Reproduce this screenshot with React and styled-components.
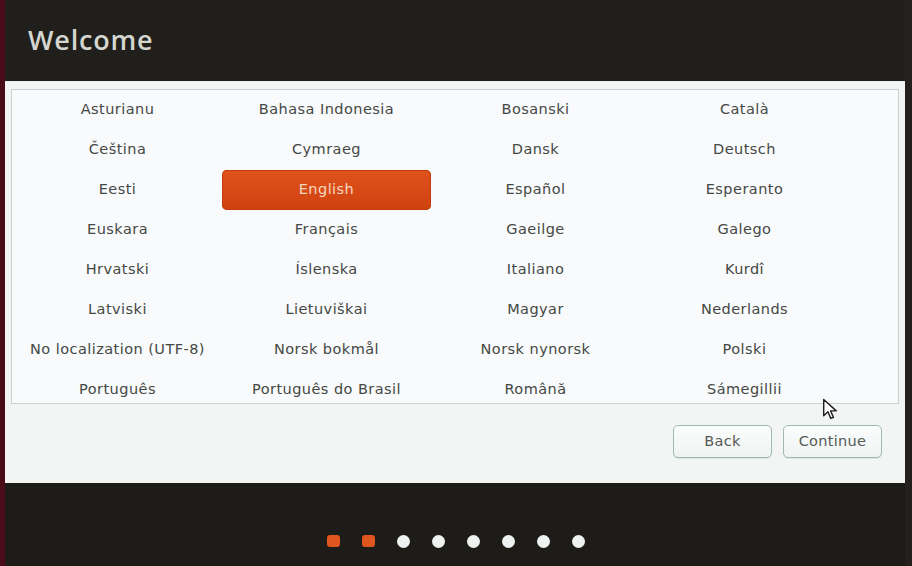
import React from 'react'
import styled, { createGlobalStyle } from 'styled-components'

const GlobalStyle = createGlobalStyle`
  html, body {
    margin: 0;
    padding: 0;
    background: #1e1c19;
  }
  body {
    font-family: "DejaVu Sans", "Open Sans", sans-serif;
  }
`

const languages = [
  'Asturianu', 'Bahasa Indonesia', 'Bosanski', 'Català',
  'Čeština', 'Cymraeg', 'Dansk', 'Deutsch',
  'Eesti', 'English', 'Español', 'Esperanto',
  'Euskara', 'Français', 'Gaeilge', 'Galego',
  'Hrvatski', 'Íslenska', 'Italiano', 'Kurdî',
  'Latviski', 'Lietuviškai', 'Magyar', 'Nederlands',
  'No localization (UTF-8)', 'Norsk bokmål', 'Norsk nynorsk', 'Polski',
  'Português', 'Português do Brasil', 'Română', 'Sámegillii',
]

const Screen = styled.div`
  width: 912px;
  height: 566px;
  display: flex;
  overflow: hidden;
  background: #1e1c19;
`

const Edge = styled.div`
  width: ${p => p.$w}px;
  flex-shrink: 0;
  background: ${p => p.$color};
`

const Main = styled.div`
  flex: 1;
  display: flex;
  flex-direction: column;
`

const Header = styled.div`
  height: 81px;
  display: flex;
  align-items: center;
  padding-left: 23px;
  padding-bottom: 2px;
  box-sizing: border-box;
  background: #211f1b;
`

const Title = styled.h1`
  margin: 0;
  font-family: "Open Sans", sans-serif;
  font-size: 27px;
  font-weight: 600;
  color: #d4d6cf;
  letter-spacing: 0.8px;
`

const Panel = styled.div`
  height: 402px;
  background: #f2f5f4;
  border-top: 1px solid #e6ecea;
  box-sizing: border-box;
  display: flex;
  flex-direction: column;
  padding: 7px 6px 0 6px;
  position: relative;
`

const ListBox = styled.div`
  height: 315px;
  background: #f8fafb;
  border: 1px solid #c9d1d1;
  box-sizing: border-box;
  overflow: hidden;
  display: grid;
  grid-template-columns: repeat(4, 209px);
  grid-auto-rows: 40px;
  padding-left: 1px;
`

const Lang = styled.div`
  display: flex;
  align-items: center;
  justify-content: center;
  padding-bottom: 3px;
  box-sizing: border-box;
  font-size: 14.5px;
  letter-spacing: 0.45px;
  color: ${p => (p.$active ? '#f4d7c0' : '#454845')};
  background: ${p => (p.$active ? 'linear-gradient(#e0521c, #cf4210)' : 'transparent')};
  border-radius: ${p => (p.$active ? '5px' : '0')};
  box-shadow: ${p => (p.$active ? 'inset 0 0 0 1px #c03c0e' : 'none')};
  white-space: nowrap;
`

const ButtonRow = styled.div`
  display: flex;
  justify-content: flex-end;
  gap: 11px;
  padding: 21px 17px 0 0;
`

const Button = styled.button`
  width: 99px;
  height: 33px;
  border: 1px solid #9fb8b6;
  border-radius: 5px;
  background: linear-gradient(#fbfdfd, #eef3f2);
  box-shadow: 0 1px 0 #d7e6e4;
  font-family: inherit;
  font-size: 14.5px;
  letter-spacing: 0.3px;
  color: #555855;
  padding: 0 0 2px 0;
`

const Cursor = styled.svg`
  position: absolute;
  left: 817px;
  top: 316px;
`

const Dots = styled.div`
  flex: 1;
  display: flex;
  align-items: flex-start;
  justify-content: center;
  gap: 22px;
  padding: 52px 0 0 1px;
  background: #1e1c19;
`

const Dot = styled.span`
  width: 13px;
  height: ${p => (p.$done ? '12px' : '13px')};
  border-radius: ${p => (p.$done ? '3px' : '50%')};
  background: ${p => (p.$done ? '#e0561f' : '#eef2f1')};
`

export default function App() {
  return (
    <>
      <GlobalStyle />
      <Screen>
        <Edge $w={5} $color="#4a0c18" />
        <Main>
          <Header>
            <Title>Welcome</Title>
          </Header>
          <Panel>
            <ListBox>
              {languages.map(l => (
                <Lang key={l} $active={l === 'English'}>{l}</Lang>
              ))}
            </ListBox>
            <ButtonRow>
              <Button>Back</Button>
              <Button>Continue</Button>
            </ButtonRow>
            <Cursor width="17" height="23" viewBox="0 0 16 22">
              <path d="M1.5 1.5 L1.5 17 L5.5 13.2 L8.3 19.5 L10.8 18.4 L8.1 12.3 L13.5 12.3 Z" fill="#fff" stroke="#222" strokeWidth="1.4" strokeLinejoin="round" />
            </Cursor>
          </Panel>
          <Dots>
            {[0, 1, 2, 3, 4, 5, 6, 7].map(i => (
              <Dot key={i} $done={i < 2} />
            ))}
          </Dots>
        </Main>
        <Edge $w={7} $color="#24201d" />
      </Screen>
    </>
  )
}
